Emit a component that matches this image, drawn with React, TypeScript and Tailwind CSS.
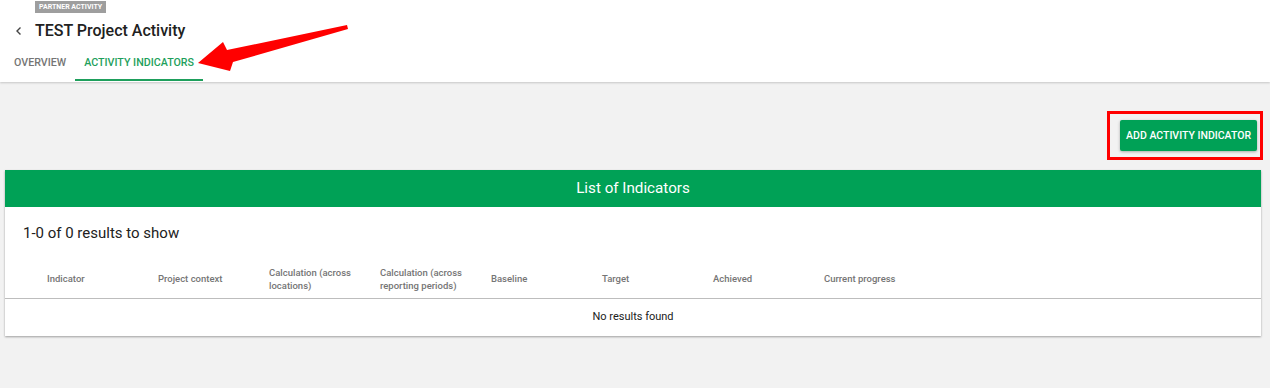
export default function App() {
  const columns = [
    'Indicator',
    'Project context',
    'Calculation (across locations)',
    'Calculation (across reporting periods)',
    'Baseline',
    'Target',
    'Achieved',
    'Current progress',
  ];

  return (
    <div className="relative h-[388px] w-[1270px] bg-[#f2f2f2] font-['Roboto',sans-serif]">
      {/* page header */}
      <div className="h-[82px] bg-white shadow-[0_1px_2px_rgba(0,0,0,0.18)]">
        <div className="flex pl-[35px] pt-[1px]">
          <span className="h-[12px] bg-[#9e9e9e] px-[4px] text-[7px] font-bold leading-[12px] text-white uppercase">
            Partner Activity
          </span>
        </div>
        <div className="mt-[8px] flex h-[20px] items-center">
          <svg width="10" height="10" viewBox="0 0 10 10" className="ml-[14px]">
            <path d="M6.5 1.5 L3 5 L6.5 8.5" fill="none" stroke="#444" strokeWidth="1.4" />
          </svg>
          <h1 className="ml-[11px] text-[16px] font-medium leading-[20px] text-[#212121]">TEST Project Activity</h1>
        </div>
        <div className="mt-[7px] flex text-[10.7px] font-medium leading-[14px] uppercase">
          <div className="px-[14px] pt-[8px] pb-[11px] text-[#757575]">Overview</div>
          <div className="-ml-[5px] border-b-2 border-[#1e9f5c] px-[9px] pt-[8px] pb-[9px] text-[#1e9f5c]">Activity Indicators</div>
        </div>
      </div>

      {/* annotation arrow */}
      <svg className="absolute left-0 top-0" width="360" height="80" viewBox="0 0 360 80">
        <polygon points="198,63 223,42 227,50 347,25 348,29 233,62 230,71" fill="#ff0000" />
      </svg>

      {/* toolbar */}
      <div className="flex justify-end pt-[29px] pr-[7px]">
        <div className="flex border-[3px] border-[#ff0000] pl-[10px] pr-[3px] py-[6px]">
          <button className="h-[31px] rounded-[2px] bg-[#00a156] px-[6px] text-[10.5px] font-medium text-white uppercase shadow-[0_1px_3px_rgba(0,0,0,0.3)]">
            Add Activity Indicator
          </button>
        </div>
      </div>

      {/* card */}
      <div className="mx-[5px] mt-[10px] w-[1256px] bg-white shadow-[0_1px_2px_rgba(0,0,0,0.35)]">
        <div className="flex h-[37px] items-center justify-center bg-[#00a156] text-[15.2px] text-white">List of Indicators</div>
        <div className="px-[18px] pt-[16px] text-[15px] leading-[20px] text-[#212121]">1-0 of 0 results to show</div>
        <div className="mt-[16px] flex h-[40px] items-center border-b border-[#bdbdbd] pl-[31px]">
          {columns.map((c) => (
            <div key={c} className="w-[111px] px-[11px] text-[9.5px] font-medium leading-[13px] text-[#757575]">
              {c}
            </div>
          ))}
        </div>
        <div className="flex h-[37px] items-center justify-center text-[11px] text-[#212121]">No results found</div>
      </div>
    </div>
  );
}
